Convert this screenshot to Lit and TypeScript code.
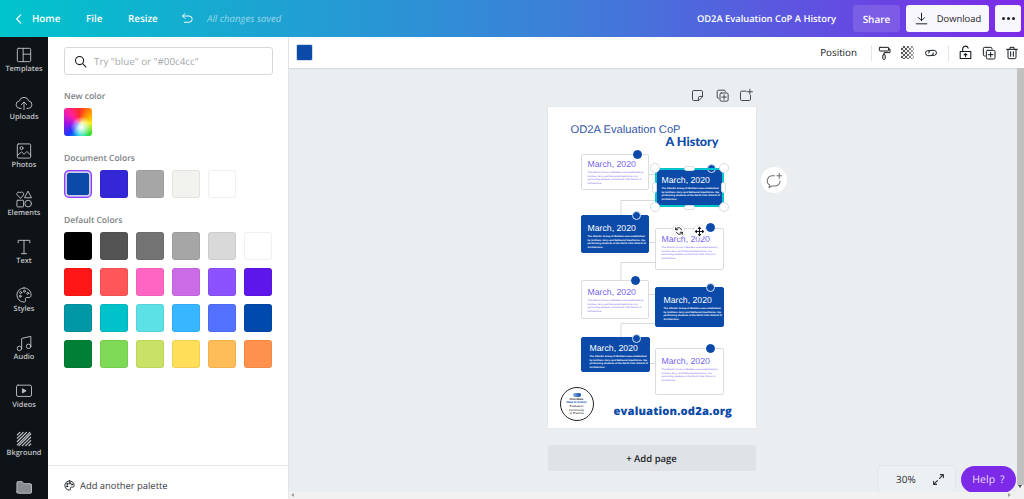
import { LitElement, html, css, svg } from "lit";
import { customElement } from "lit/decorators.js";

const BODY = "The Atlantic Group of Builders was established by brothers Jerry and Nathaniel Hawthorne, top performing students at the North Cole School of Architecture.";

const doc = ["#0b4aa8", "#3427d8", "#a6a6a6", "#f2f3ee", "#ffffff"];
const def = [
  "#000000", "#545454", "#737373", "#a6a6a6", "#d9d9d9", "#ffffff",
  "#ff1616", "#ff5757", "#ff66c4", "#cb6ce6", "#8c52ff", "#5e17eb",
  "#0097a7", "#00c2cb", "#5ce1e6", "#38b6ff", "#5271ff", "#004aad",
  "#008037", "#7ed957", "#c9e265", "#ffde59", "#ffbd59", "#ff914d",
];

const PX = 548, PY = 107;
const cards = [
  { x: 581, y: 154, w: 68, h: 36, blue: false, dx: 638, dy: 154, tx: 6, ty: 4 },
  { x: 655, y: 169, w: 69, h: 38, blue: true, dx: 712, dy: 168, tx: 6, ty: 5 },
  { x: 581, y: 215, w: 68, h: 38, blue: true, dx: 637, dy: 215, tx: 6, ty: 7 },
  { x: 655, y: 228, w: 69, h: 42, blue: false, dx: 711, dy: 227, tx: 6, ty: 5 },
  { x: 581, y: 280, w: 68, h: 39, blue: false, dx: 636, dy: 280, tx: 6, ty: 6 },
  { x: 655, y: 287, w: 69, h: 40, blue: true, dx: 711, dy: 287, tx: 8, ty: 7 },
  { x: 581, y: 337, w: 69, h: 35, blue: true, dx: 637, dy: 338, tx: 8, ty: 5 },
  { x: 655, y: 348, w: 69, h: 47, blue: false, dx: 711, dy: 348, tx: 6, ty: 7 },
];
const lines = [
  [649, 174, 655, 174], [621, 200, 655, 200], [621, 200, 621, 215],
  [649, 242, 655, 242], [621, 262, 655, 262], [621, 262, 621, 280],
  [649, 294, 655, 294], [621, 323, 655, 323], [621, 323, 621, 337],
  [649, 363, 655, 363],
];

const ic = (body: unknown, size = 20, sw = 1.3) => html`<svg width=${size} height=${size} viewBox="0 0 24 24" fill="none" stroke="currentColor" stroke-width=${sw} stroke-linecap="round" stroke-linejoin="round">${body}</svg>`;

const I = {
  templates: svg`<rect x="4" y="4" width="16" height="16" rx="1.2"/><path d="M11 4v16M11 11h9"/>`,
  uploads: svg`<path d="M7 18.5a4.5 4.5 0 0 1-.6-8.96 5.8 5.8 0 0 1 11.2 0A4.5 4.5 0 0 1 17 18.5h-1.5M8.500 18.500H7M12 20v-9M8.800 14 12 10.800 15.200 14"/>`,
  photos: svg`<rect x="4" y="3.500" width="16" height="17" rx="1.500"/><circle cx="9" cy="8.500" r="1.800"/><path d="m4.500 17 4.500-4 3 3 3.500-3.500 4.500 4.500"/>`,
  elements: svg`<path d="M7.500 11 3.500 6.800a2.400 2.400 0 0 1 4-2.400 2.400 2.400 0 0 1 4 2.400zM17 3l4 7.500h-8z"/><rect x="3.500" y="13.500" width="8" height="8" rx="1"/><circle cx="17" cy="17.500" r="4"/>`,
  text: svg`<path d="M5 7V4h14v3M12 4v16M9 20h6"/>`,
  styles: svg`<path d="M12 3.500a8.500 8.500 0 1 0 0 17c1.600 0 2.200-1.200 1.700-2.500-.6-1.500.2-3 1.900-3h2.400c1.500 0 2.500-1 2.500-2.800C20.500 7 16.700 3.500 12 3.500z"/><circle cx="8" cy="9" r="1.200"/><circle cx="12.500" cy="7.500" r="1.200"/><circle cx="16.500" cy="10" r="1.200"/><circle cx="7.500" cy="13.500" r="1.200"/>`,
  audio: svg`<circle cx="6.500" cy="18.500" r="2.700"/><circle cx="17.500" cy="16" r="2.700"/><path d="M9.200 18.500V6.500L20.200 4v12"/>`,
  videos: svg`<rect x="3" y="5" width="18" height="13.500" rx="1.800"/><path d="m10.500 9.500 4 2.300-4 2.300z" fill="currentColor"/>`,
  folder: svg`<path d="M3.500 18V7a1.500 1.500 0 0 1 1.500-1.500h4.500L12 8h7.500A1.500 1.500 0 0 1 21 9.500V18a1.500 1.500 0 0 1-1.500 1.500H5A1.500 1.500 0 0 1 3.500 18z" fill="#8a8d90"/>`,
  bk: svg`<path d="M4 11 11 4M4 15 15 4M4 19 19 4M6 20 20 6M10 20 20 10M14 20l6-6M4 7l3-3M18 20l2-2" stroke-width="1.500"/>`,
};

@customElement("app-root")
export class AppRoot extends LitElement {
  static styles = css`
    :host { display: block; width: 1024px; height: 499px; overflow: hidden; font-family: "Open Sans", "Noto Sans", sans-serif; text-rendering: geometricPrecision; }
    * { box-sizing: border-box; }
    .app { display: flex; flex-direction: column; height: 499px; }
    .top { height: 37px; flex: none; display: flex; align-items: center; color: #fff; font-size: 9.800px; font-weight: 600; padding: 0 3px 0 12px;
      background: linear-gradient(90deg, #00c4cc 0%, #3d7fd8 55%, #7d2ae8 100%); }
    .top svg { display: block; }
    .home { margin-left: 6px; width: 54px; }
    .file { width: 42px; }
    .resize { width: 52px; }
    .undo { width: 27px; }
    .saved { font-weight: 400; font-style: italic; color: rgba(255,255,255,.55); font-size: 9.600px; }
    .doc { margin-left: auto; margin-right: 17px; font-size: 9.350px; }
    .share { width: 47px; height: 27px; border-radius: 3px; background: rgba(255,255,255,.13); display: flex; align-items: center; justify-content: center; margin-right: 6px; font-size: 10px; }
    .dl { width: 83px; height: 27px; border-radius: 3px; background: #f8f7fc; color: #1d2329; font-weight: 400; font-size: 9.400px; display: flex; align-items: center; justify-content: center; gap: 8px; margin-right: 6px; }
    .more { width: 26px; height: 27px; border-radius: 3px; background: #f8f7fc; color: #1d2329; display: flex; align-items: center; justify-content: center; gap: 2px; }
    .more i { width: 3px; height: 3px; border-radius: 50%; background: #1d2329; }
    .body { flex: 1; display: flex; min-height: 0; }
    .rail { width: 48px; flex: none; background: #0e1318; color: #c2c4c6; padding-top: 8px; overflow: hidden; }
    .ri { height: 48px; display: flex; flex-direction: column; align-items: center; font-size: 7.400px; font-weight: 600; line-height: 9px; }
    .ri svg { display: block; height: 20px; }
    .panel { width: 241px; flex: none; background: #fff; border-right: 1px solid #e3e6e9; display: flex; flex-direction: column; }
    .scroll { flex: 1; padding: 10px 15px 0 16px; }
    .search { width: 209px; height: 28px; border: 1px solid #d6d9dc; border-radius: 3px; display: flex; align-items: center; gap: 6px; padding-left: 8px; color: #a4a8ac; font-size: 9.800px; }
    .search svg { color: #14181c; }
    h4 { margin: 0; font-size: 8.500px; line-height: 12px; font-weight: 600; color: #7d8185; }
    .h1 { margin-top: 16px; }
    .h2 { margin-top: 17px; }
    .h3 { margin-top: 17px; }
    .grid { display: grid; grid-template-columns: repeat(6, 28px); gap: 8px; margin-top: 5px; }
    .sw { width: 28px; height: 28px; border-radius: 3px; border: 1px solid rgba(0,0,0,.06); }
    .rainbow { margin-top: 5px; border: 0; background:
      radial-gradient(circle at 62% 68%, #fff 0%, rgba(255,255,255,.7) 15%, rgba(255,255,255,0) 42%),
      conic-gradient(from 0deg at 55% 55%, #ff2a2a, #ff9a00, #f3ee00, #2be02b, #00d8d8, #1a38ff, #a214e6, #ff1fa0, #ff2a2a); }
    .sel { width: 24px; height: 24px; margin: 2px; border: 1px solid #c9cfe0; box-shadow: 0 0 0 .500px #fff, 0 0 0 2px #8b3dff; }
    .foot { height: 34px; flex: none; border-top: 1px solid #e3e6e9; display: flex; align-items: center; gap: 4px; padding: 5px 0 0 15px; font-size: 9.400px; color: #3b4046; }
    .foot svg { color: #14181c; }
    .main { flex: 1; min-width: 0; display: flex; flex-direction: column; background: #ebeef1; position: relative; }
    .tools { height: 31px; flex: none; background: #fff; box-shadow: 0 1px 1px rgba(0,0,0,.08); display: flex; align-items: center; padding-left: 7px; color: #14181c; font-size: 9.800px; font-weight: 600; }
    .tcolor { width: 17px; height: 17px; background: #0b4aa8; border-radius: 2px; border: 1px solid #d3d9e6; }
    .pos { margin-left: auto; margin-right: 14px; font-weight: 500; }
    .vsep { width: 1px; height: 16px; background: #e3e6e9; }
    .tic { width: 23.500px; display: flex; justify-content: center; }
    .g2 { margin-left: 5px; }
    .checker { width: 13px; height: 13px; background: conic-gradient(#555 25%, #eee 0 50%, #555 0 75%, #eee 0) 0 0 / 4px 4px; -webkit-mask-image: linear-gradient(90deg, #000 40%, rgba(0,0,0,.45)); }
    .stage { flex: 1; min-height: 0; position: relative; display: flex; flex-direction: column; align-items: center; padding-right: 10px; }
    .pa { width: 208px; height: 39px; display: flex; justify-content: flex-end; align-items: flex-end; padding: 0 3px 4px 0; gap: 5px; color: #3b4046; }
    .pa svg { display: block; }
    .page { width: 208px; height: 321px; background: #fff; position: relative; flex: none; box-shadow: 0 0 1px rgba(0,0,0,.1); font-family: "Liberation Sans", Arial, sans-serif; }
    .t1 { position: absolute; left: 23px; top: 16px; font-size: 11.200px; color: #3257a8; white-space: nowrap; line-height: 14px; }
    .t2 { position: absolute; left: 118px; top: 27px; font-size: 12.500px; color: #0b4aa8; font-family: Lato, sans-serif; font-weight: 900; white-space: nowrap; line-height: 16px; }
    .url { position: absolute; left: 66px; top: 297px; font-size: 11.200px; font-weight: 800; color: #0b4aa8; font-family: "Open Sans", sans-serif; white-space: nowrap; line-height: 16px; letter-spacing: .15px; }
    .wires { position: absolute; left: 0; top: 0; }
    .card { position: absolute; border-radius: 2px; border: 1px solid #dcdcdc; background: #fff; color: #7766f0; overflow: hidden; }
    .card.blue { background: #0b4aa8; border-color: #0b4aa8; color: #fff; }
    .card b { display: block; font-weight: 400; font-size: 8.700px; line-height: 10px; white-space: nowrap; }
    .card p { margin: 2px 0 0; font-size: 2.550px; line-height: 3.700px; width: 60px; }
    .card.blue p { font-weight: 700; }
    .dot { position: absolute; width: 9px; height: 9px; border-radius: 50%; background: #0b4aa8; border: 1px solid #0b4aa8; }
    .dot.ring { border-color: #d9e2f2; }
    .logo { position: absolute; left: 12px; top: 280px; width: 34px; height: 34px; border-radius: 50%; border: 1.500px solid #222; background: #fff; display: flex; flex-direction: column; align-items: center; justify-content: center; color: #111; font-size: 3px; line-height: 3.300px; font-weight: 700; text-align: center; }
    .logo .pill { width: 8px; height: 4px; border-radius: 2px; background: linear-gradient(90deg,#8fb0e0,#0b4aa8); margin-bottom: 1px; }
    .logo em { font-style: normal; color: #0b4aa8; }
    .logo span { display: block; }
    .logo .sub { font-weight: 400; }
    .logo .first { margin-top: 1px; }
    .frame { position: absolute; border: 2px solid #00c4cc; }
    .h { position: absolute; background: #fff; border: 1px solid #d8dbdf; }
    .h.c { width: 10px; height: 10px; border-radius: 50%; }
    .h.hp { width: 11px; height: 5px; border-radius: 3px; }
    .h.vp { width: 5px; height: 11px; border-radius: 3px; }
    .fab { position: absolute; width: 13px; height: 13px; border-radius: 50%; background: #fff; display: flex; align-items: center; justify-content: center; color: #14181c; box-shadow: 0 0 1px rgba(0,0,0,.3); }
    .comment { position: absolute; left: 472px; top: 99px; width: 26px; height: 26px; border-radius: 50%; background: #fff; display: flex; align-items: center; justify-content: center; color: #6b7075; }
    .add { width: 208px; height: 26px; margin-top: 17px; flex: none; background: #dfe3e7; border-radius: 3px; display: flex; align-items: center; justify-content: center; color: #1d2329; font-size: 9.500px; font-weight: 600; }
    .zoom { position: absolute; left: 588px; top: 397px; width: 79px; height: 28px; border-radius: 6px; border: 1px solid #e3e6e9; background: #edf0f2; color: #2b3036; font-size: 10px; display: flex; align-items: center; padding-left: 18px; gap: 16px; font-weight: 500; }
    .help { position: absolute; left: 672px; top: 398px; width: 55px; height: 27px; border-radius: 14px; background: #7d2ae8; color: #e9dcfb; font-size: 10.500px; display: flex; align-items: center; justify-content: center; gap: 5px; font-weight: 500; }
    .sbv { position: absolute; right: 0; top: 0; bottom: 0; width: 7px; background: #f1f1f1; }
    .sbv i { display: block; width: 7px; height: 417px; background: #c1c1c1; }
    .sbv u { position: absolute; left: 1px; bottom: 11px; border: 2.500px solid transparent; border-top: 3px solid #505050; border-bottom: 0; }
    .sbh { position: absolute; left: 0; right: 7px; bottom: 0; height: 7px; background: #f1f1f1; }
    .sbh u { position: absolute; right: 6px; top: 1px; border: 2.500px solid transparent; border-left: 3px solid #a0a0a0; border-right: 0; }
    .sbh s { position: absolute; left: 2px; top: 1px; border: 2.500px solid transparent; border-right: 3px solid #a0a0a0; border-left: 0; }
  `;

  private rail() {
    const items: [unknown, string][] = [
      [I.templates, "Templates"], [I.uploads, "Uploads"], [I.photos, "Photos"], [I.elements, "Elements"],
      [I.text, "Text"], [I.styles, "Styles"], [I.audio, "Audio"], [I.videos, "Videos"], [I.bk, "Bkground"], [I.folder, ""],
    ];
    return items.map(([b, l]) => html`<div class="ri">${ic(b, 20, 1.1)}<span>${l}</span></div>`);
  }

  private pos(x: number, y: number, w?: number, h?: number) {
    return `left:${x - PX}px;top:${y - PY}px;` + (w ? `width:${w}px;height:${h}px;` : "");
  }

  private design() {
    const c = cards[1];
    const fx = c.x, fy = c.y - 1, fw = c.w, fh = c.h + 1;
    return html`
      <div class="t1">OD2A Evaluation CoP</div>
      <div class="t2">A History</div>
      <svg class="wires" width="208" height="321">
        ${lines.map(([a, b, d, e]) => svg`<line x1=${a - PX} y1=${b - PY + 0.5} x2=${d - PX} y2=${e - PY + 0.5} stroke="#d9d9d9" stroke-width="1"/>`)}
      </svg>
      ${cards.map((k) => html`
        <div class="card ${k.blue ? "blue" : ""}" style="${this.pos(k.x, k.y, k.w, k.h)}padding:${k.ty}px 0 0 ${k.tx}px">
          <b>March, 2020</b><p>${BODY}</p>
        </div>
        <div class="dot ${k.blue ? "ring" : ""}" style="${this.pos(k.dx - 4.5, k.dy - 4.5)}"></div>`)}
      <div class="frame" style="${this.pos(fx, fy, fw, fh)}"></div>
      ${[[fx, fy], [fx + fw, fy], [fx, fy + fh], [fx + fw, fy + fh]].map(([x, y]) => html`<div class="h c" style="${this.pos(x - 5, y - 5)}"></div>`)}
      <div class="h hp" style="${this.pos(fx + fw / 2 - 5.5, fy - 2.5)}"></div>
      <div class="h hp" style="${this.pos(fx + fw / 2 - 5.5, fy + fh - 2.5)}"></div>
      <div class="h vp" style="${this.pos(fx - 2.5, fy + fh / 2 - 5.5)}"></div>
      <div class="h vp" style="${this.pos(fx + fw - 2.5, fy + fh / 2 - 5.5)}"></div>
      <div class="fab" style="${this.pos(672.5, 224.5)}">${ic(svg`<path d="M18 9a7 7 0 0 0-12-2.500L4 9M4 4v5h5M6 15a7 7 0 0 0 12 2.500l2-2.500M20 20v-5h-5"/>`, 10, 2.2)}</div>
      <div class="fab" style="${this.pos(693.5, 224.5)}">${ic(svg`<path d="M12 3v18M3 12h18M9.500 5.500 12 3l2.500 2.500M9.500 18.500 12 21l2.500-2.500M5.500 9.500 3 12l2.500 2.500M18.500 9.500 21 12l-2.500 2.500"/>`, 11, 2.2)}</div>
      <div class="logo">
        <div class="pill"></div>
        <span>Overdose</span><span><em>Data to Action</em></span><span class="sub first">Evaluation</span><span class="sub">Community</span><span class="sub">of Practice</span>
      </div>
      <div class="url">evaluation.od2a.org</div>`;
  }

  render() {
    return html`<div class="app">
      <div class="top">
        ${ic(svg`<path d="m15 5-7 7 7 7"/>`, 14, 2)}
        <span class="home">Home</span><span class="file">File</span><span class="resize">Resize</span>
        <span class="undo">${ic(svg`<path d="M8 4 4 8l4 4M4 8h10.500a5 5 0 0 1 0 10H7"/>`, 15, 1.500)}</span>
        <span class="saved">All changes saved</span>
        <span class="doc">OD2A Evaluation CoP A History</span>
        <span class="share">Share</span>
        <span class="dl">${ic(svg`<path d="M12 3.500v12M7 10.500l5 5 5-5M3.500 20.500h17"/>`, 15, 1.600)}Download</span>
        <span class="more"><i></i><i></i><i></i></span>
      </div>
      <div class="body">
        <nav class="rail">${this.rail()}</nav>
        <aside class="panel">
          <div class="scroll">
            <div class="search">${ic(svg`<circle cx="10.500" cy="10.500" r="6.500"/><path d="m15.500 15.500 5 5"/>`, 15, 1.700)}Try "blue" or "#00c4cc"</div>
            <h4 class="h1">New color</h4>
            <div class="sw rainbow"></div>
            <h4 class="h2">Document Colors</h4>
            <div class="grid">${doc.map((c, i) => html`<div class="sw ${i === 0 ? "sel" : ""}" style="background:${c}"></div>`)}</div>
            <h4 class="h3">Default Colors</h4>
            <div class="grid">${def.map((c) => html`<div class="sw" style="background:${c}"></div>`)}</div>
          </div>
          <div class="foot">${ic(I.styles, 13, 1.700)}Add another palette</div>
        </aside>
        <main class="main">
          <div class="tools">
            <div class="tcolor"></div>
            <span class="pos">Position</span>
            <div class="vsep"></div>
            <div class="tic">${ic(svg`<rect x="5" y="3.500" width="14" height="5.500" rx="1"/><path d="M19 6h2v5.500h-9v3"/><rect x="10.200" y="14.500" width="3.600" height="7" rx="1"/>`, 16, 1.500)}</div>
            <div class="tic"><div class="checker"></div></div>
            <div class="tic">${ic(svg`<path d="M10 8.500H7a3.800 3.800 0 0 0 0 7.500h5a3.800 3.800 0 0 0 3.500-4M14 15.500h3a3.800 3.800 0 0 0 0-7.500h-5a3.800 3.800 0 0 0-3.500 4"/>`, 16, 1.500)}</div>
            <div class="vsep g2"></div>
            <div class="tic g2">${ic(svg`<path d="M4.500 10.500h15v10h-15zM8 10.500V7a4 4 0 0 1 7.800-1.200M12 18v-4.500M10 15.500l2-2 2 2"/>`, 17, 1.500)}</div>
            <div class="tic">${ic(svg`<path d="M6 16.500H5.500a2 2 0 0 1-2-2v-9a2 2 0 0 1 2-2h9a2 2 0 0 1 2 2V6"/><rect x="8" y="8" width="13" height="13" rx="2"/><path d="M14.500 11v7M11 14.500h7"/>`, 16, 1.500)}</div>
            <div class="tic">${ic(svg`<path d="M4 6.500h16M9 6.500v-3h6v3M6 6.500v12a2 2 0 0 0 2 2h8a2 2 0 0 0 2-2v-12M10 10v7M14 10v7"/>`, 16, 1.500)}</div>
          </div>
          <div class="stage">
            <div class="pa">
              ${ic(svg`<path d="M20 13.500V6a2 2 0 0 0-2-2H6a2 2 0 0 0-2 2v12a2 2 0 0 0 2 2h7.500zM20 13.500h-4.500a2 2 0 0 0-2 2V20"/>`, 15, 1.500)}
              <span style="margin-left:5px">${ic(svg`<path d="M6 16.500H5.500a2 2 0 0 1-2-2v-9a2 2 0 0 1 2-2h9a2 2 0 0 1 2 2V6"/><rect x="8" y="8" width="13" height="13" rx="2"/><path d="M14.500 11v7M11 14.500h7"/>`, 15, 1.500)}</span>
              <span style="margin-left:3px">${ic(svg`<path d="M13 5H6a2 2 0 0 0-2 2v11a2 2 0 0 0 2 2h12a2 2 0 0 0 2-2v-6M19 2v8M15 6h8"/>`, 15, 1.500)}</span>
            </div>
            <div class="page">${this.design()}</div>
            <div class="add">+ Add page</div>
            <div class="comment">${ic(svg`<path d="M12 6H9.500a6.500 6.500 0 0 0-3.500 12l-1 3 4-2h3.500a6.500 6.500 0 0 0 6.500-6.500M18 3v6M15 6h6"/>`, 19, 1.300)}</div>
            <div class="zoom"><span>30%</span>${ic(svg`<path d="M14 10l7-7M15.500 3H21v5.500M10 14l-7 7M3 15.500V21h5.500"/>`, 13, 2)}</div>
            <div class="help"><span>Help</span><span>?</span></div>
            <div class="sbv"><i></i><u></u></div>
            <div class="sbh"><s></s><u></u></div>
          </div>
        </main>
      </div>
    </div>`;
  }
}
